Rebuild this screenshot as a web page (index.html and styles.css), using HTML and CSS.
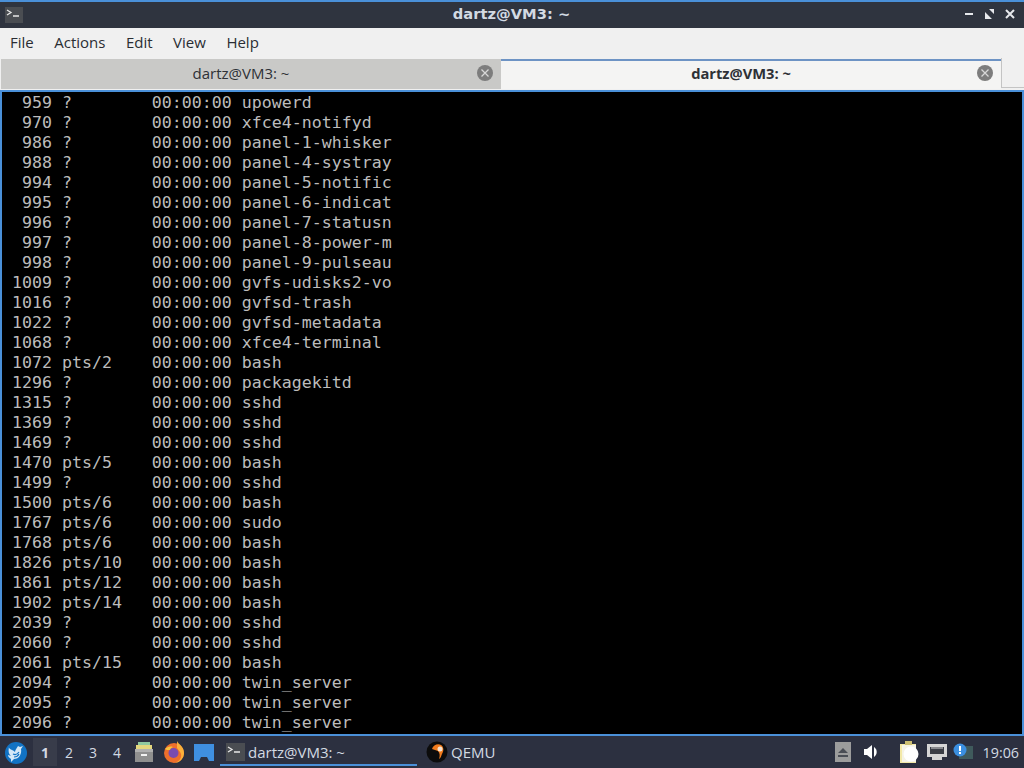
FILE: index.html
```html
<!DOCTYPE html>
<html lang="en">
<head>
<meta charset="utf-8">
<title>dartz@VM3: ~</title>
<link rel="stylesheet" href="styles.css">
</head>
<body>
<div class="window">
  <header class="titlebar">
    <span class="app-icon"><svg viewBox="0 0 18 16" width="18" height="16"><path d="M2 3l4 2.500-4 2.500" fill="none" stroke="#e8e8e8" stroke-width="1.300"/><path d="M8 9h6" stroke="#e8e8e8" stroke-width="1.500"/></svg></span>
    <span class="title">dartz@VM3: ~</span>
    <span class="wm-buttons">
      <svg viewBox="0 0 12 12" width="12" height="12"><path d="M1 6h8" stroke="#e6e8ec" stroke-width="2"/></svg>
      <svg viewBox="0 0 12 12" width="12" height="12"><path d="M1 4V11H8zM10 6V1H5z" fill="#e6e8ec"/></svg>
      <svg viewBox="0 0 12 12" width="12" height="12"><path d="M2 2l8 8M10 2l-8 8" stroke="#e6e8ec" stroke-width="2"/></svg>
    </span>
  </header>
  <nav class="menubar">
    <span class="menu-item">File</span><span class="menu-item">Actions</span><span class="menu-item">Edit</span><span class="menu-item">View</span><span class="menu-item">Help</span>
  </nav>
  <div class="tabs">
    <div class="tab">
      <span class="tab-label">dartz@VM3: ~</span>
      <svg class="tab-close" viewBox="0 0 16 16" width="16" height="16"><circle cx="8" cy="8" r="8" fill="#7d7d7d"/><path d="M4.500 4.500l7 7M11.500 4.500l-7 7" stroke="#d8d8d8" stroke-width="1.300"/></svg>
    </div>
    <div class="tab tab-active">
      <span class="tab-label">dartz@VM3: ~</span>
      <svg class="tab-close" viewBox="0 0 16 16" width="16" height="16"><circle cx="8" cy="8" r="8" fill="#7d7d7d"/><path d="M4.500 4.500l7 7M11.500 4.500l-7 7" stroke="#d8d8d8" stroke-width="1.300"/></svg>
    </div>
    <div class="tab-rest"></div>
  </div>
<pre class="terminal">  959 ?        00:00:00 upowerd
  970 ?        00:00:00 xfce4-notifyd
  986 ?        00:00:00 panel-1-whisker
  988 ?        00:00:00 panel-4-systray
  994 ?        00:00:00 panel-5-notific
  995 ?        00:00:00 panel-6-indicat
  996 ?        00:00:00 panel-7-statusn
  997 ?        00:00:00 panel-8-power-m
  998 ?        00:00:00 panel-9-pulseau
 1009 ?        00:00:00 gvfs-udisks2-vo
 1016 ?        00:00:00 gvfsd-trash
 1022 ?        00:00:00 gvfsd-metadata
 1068 ?        00:00:00 xfce4-terminal
 1072 pts/2    00:00:00 bash
 1296 ?        00:00:00 packagekitd
 1315 ?        00:00:00 sshd
 1369 ?        00:00:00 sshd
 1469 ?        00:00:00 sshd
 1470 pts/5    00:00:00 bash
 1499 ?        00:00:00 sshd
 1500 pts/6    00:00:00 bash
 1767 pts/6    00:00:00 sudo
 1768 pts/6    00:00:00 bash
 1826 pts/10   00:00:00 bash
 1861 pts/12   00:00:00 bash
 1902 pts/14   00:00:00 bash
 2039 ?        00:00:00 sshd
 2060 ?        00:00:00 sshd
 2061 pts/15   00:00:00 bash
 2094 ?        00:00:00 twin_server
 2095 ?        00:00:00 twin_server
 2096 ?        00:00:00 twin_server</pre>
</div>
<footer class="panel">
  <span class="start"><svg viewBox="0 0 24 24" width="24" height="24"><circle cx="12" cy="12" r="11" fill="#1273c4"/><path d="M5 7c2 2 4 2 6 4 0-2 2-4 3-6l2 1 3-1-2 3c1 5-2 10-7 10l-3 3 0-3c-2-1-3-3-3-4l3 1c-2-2-3-4-2-9z" fill="#d4e8f7"/><path d="M9 13c2 1 4 1 6-2M10 16c2 0 4-1 5-3" stroke="#1273c4" stroke-width="1.200" fill="none"/></svg></span>
  <span class="pager"><span class="ws ws-active">1</span><span class="ws">2</span><span class="ws">3</span><span class="ws">4</span></span>
  <span class="launchers">
    <svg viewBox="0 0 24 24" width="24" height="24"><path d="M6 2h12v4H6z" fill="#8fc9a0"/><path d="M4 5h16v4H4z" fill="#e4d77e"/><path d="M3 9h18v13H3z" fill="#8f8f8f"/><path d="M3 9h18v3H3z" fill="#b0b0b0"/><path d="M9 14h6v2H9z" fill="#f2f2f2"/></svg>
    <svg viewBox="0 0 24 24" width="24" height="24"><circle cx="12" cy="13" r="10" fill="#ee6f2c"/><path d="M15 1c1 3 7 5 7 12 0 5-4 10-10 10 5-1 8-5 7-9-1-3-3-4-4-6z" fill="#fbb03a"/><circle cx="11.500" cy="13" r="5" fill="#7a4bb0"/><path d="M3 9c2-2 5-3 8-2-2 1-3 2-3 3-2 0-4 0-5-1z" fill="#f6c343"/></svg>
    <svg viewBox="0 0 24 24" width="24" height="24"><path d="M2 4h20v17h-5l-2-4H9l-2 4H2z" fill="#3f8fe0"/></svg>
  </span>
  <span class="task task-active">
    <span class="task-icon"><svg viewBox="0 0 18 18" width="18" height="18"><path d="M2 4l4 2.500-4 2.500" fill="none" stroke="#e8e8e8" stroke-width="1.300"/><path d="M8 9h6" stroke="#e8e8e8" stroke-width="1.500"/></svg></span>
    <span class="task-label">dartz@VM3: ~</span>
  </span>
  <span class="task task-plain">
    <svg viewBox="0 0 22 22" width="22" height="22"><circle cx="11" cy="11" r="10.500" fill="#0c0c0c"/><path d="M6 8c1-4 6-6 9-4 3 2 3 6 1 9-1 2-1 4-3 5 1-3 1-6-1-8-2-1-4-1-6-2z" fill="#f07a1c"/><circle cx="14" cy="8" r="2.500" fill="#f5e3d0"/></svg>
    <span class="task-label">QEMU</span>
  </span>
  <span class="tray">
    <span class="eject"><svg viewBox="0 0 16 16" width="16" height="16"><path d="M3 9l5-5 5 5zM3 11h10v2H3z" fill="#4a4d55"/></svg></span>
    <svg class="volume" viewBox="0 0 18 18" width="18" height="18"><path d="M1 6h3l5-4v14l-5-4H1z" fill="#fff"/><path d="M11 4a6 6 0 0 1 0 10z" fill="#fff"/></svg>
    <svg class="notes" viewBox="0 0 20 24" width="20" height="24"><path d="M1 4h16v19H1z" fill="#f3e9a8"/><path d="M6 1h7v4H6z" fill="#cdbf72"/><path d="M3 5h14v17H3z" fill="#f5f3e6"/><circle cx="12" cy="14" r="7.500" fill="#fff"/></svg>
    <svg class="net" viewBox="0 0 20 18" width="20" height="18"><path d="M0 1h20v13h-5v3H5v-3H0z" fill="#d5d5d5"/><path d="M3 4h14v7H3z" fill="#3a3d45"/><path d="M5 4v2M7 4v2M9 4v2M11 4v2M13 4v2M15 4v2" stroke="#d5d5d5"/></svg>
    <svg class="msg" viewBox="0 0 20 20" width="20" height="20"><path d="M6 4h14v13H6z" fill="#3f5a5c"/><circle cx="7" cy="8" r="6.500" fill="#3b8fe0"/><path d="M6 4h2v5H6zM6 10h2v2H6z" fill="#fff"/></svg>
  </span>
  <span class="clock">19:06</span>
</footer>
</body>
</html>
```
FILE: styles.css
```css
* { box-sizing: border-box; }
html, body { margin: 0; padding: 0; }
body {
  width: 1024px;
  height: 768px;
  overflow: hidden;
  display: flex;
  flex-direction: column;
  background: #2c3040;
  font-family: "Open Sans", "Noto Sans", sans-serif;
}
.window {
  height: 736px;
  display: flex;
  flex-direction: column;
  background: #000;
  border: 2px solid #4a90d9;
}
.titlebar {
  height: 26px;
  flex: none;
  margin: 0 -2px;
  padding: 0 6px 0 5px;
  display: flex;
  align-items: center;
  background: #2f343f;
  color: #d3dae3;
}
.app-icon {
  width: 18px;
  height: 16px;
  background: #4a4d52;
  display: flex;
}
.title {
  flex: 1;
  text-align: center;
  font-family: "DejaVu Sans", sans-serif;
  font-size: 14.700px;
  font-weight: 700;
  padding: 0 0 3px 36px;
}
.wm-buttons { display: flex; gap: 8px; align-items: center; padding: 0 2px 3px 0; }
.menubar {
  height: 30px;
  flex: none;
  margin: 0 -2px;
  padding: 0 10px 2px;
  display: flex;
  align-items: center;
  gap: 20.500px;
  background: #f0f0f0;
  color: #2a2d33;
  font-size: 15px;
}
.tabs {
  height: 32px;
  flex: none;
  margin: 0 -2px;
  display: flex;
  background: #f0f0f0;
  color: #2e3136;
  font-size: 15px;
}
.tab {
  width: 500px;
  margin: 1px 0 0 1px;
  height: 30px;
  display: flex;
  align-items: center;
  padding: 0 8px 3px 4px;
  background: #c9c9c7;
}
.tab-active {
  margin-left: 0;
  padding-bottom: 5px;
  background: #f4f4f3;
  font-size: 14.700px;
  font-weight: 700;
  border-top: 2px solid #6d93c4;
}
.tab-close { margin-top: 1px; }
.tab-label { flex: 1; text-align: center; }
.tab-rest {
  flex: 1;
  height: 30px;
  border-bottom: 1px solid #c4c4c4;
  border-left: 1px solid #c4c4c4;
}
.terminal {
  flex: 1;
  margin: 0;
  padding: 1px 0 0;
  overflow: hidden;
  background: #000;
  color: #bcbcbc;
  font-family: "DejaVu Sans Mono", monospace;
  font-size: 16.600px;
  line-height: 20px;
  border-top: 2px solid #4a90d9;
}
.panel {
  flex: 1;
  display: flex;
  align-items: center;
  padding: 0 5px 0 4px;
  color: #d3dae3;
  font-size: 15px;
}
.start { width: 24px; height: 24px; display: flex; margin-top: 2px; }
.pager { display: flex; margin-left: 5px; }
.ws { width: 24px; height: 28px; display: flex; align-items: center; justify-content: center; font-size: 14px; }
.ws-active { background: #383c4a; font-weight: 700; }
.launchers { display: flex; gap: 6px; margin-left: 3px; }
.task {
  display: flex;
  align-items: center;
  gap: 3px;
  height: 30px;
  margin-bottom: 2px;
  padding-top: 3px;
  border-bottom: 2px solid transparent;
}
.task-active {
  width: 197px;
  margin-left: 4px;
  padding-left: 6px;
  border-bottom-color: #4a90d9;
}
.task-icon { width: 19px; height: 18px; background: #4a4d52; display: flex; }
.task-plain { margin-left: 9px; }
.tray { margin-left: auto; display: flex; align-items: center; }
.eject { width: 16px; height: 20px; background: #9c9c9c; display: flex; align-items: center; }
.volume { margin-left: 12px; }
.notes { margin-left: 18px; }
.net { margin-left: 8px; }
.msg { margin-left: 6px; }
.clock { margin-left: 10px; font-size: 14.300px; }
```
